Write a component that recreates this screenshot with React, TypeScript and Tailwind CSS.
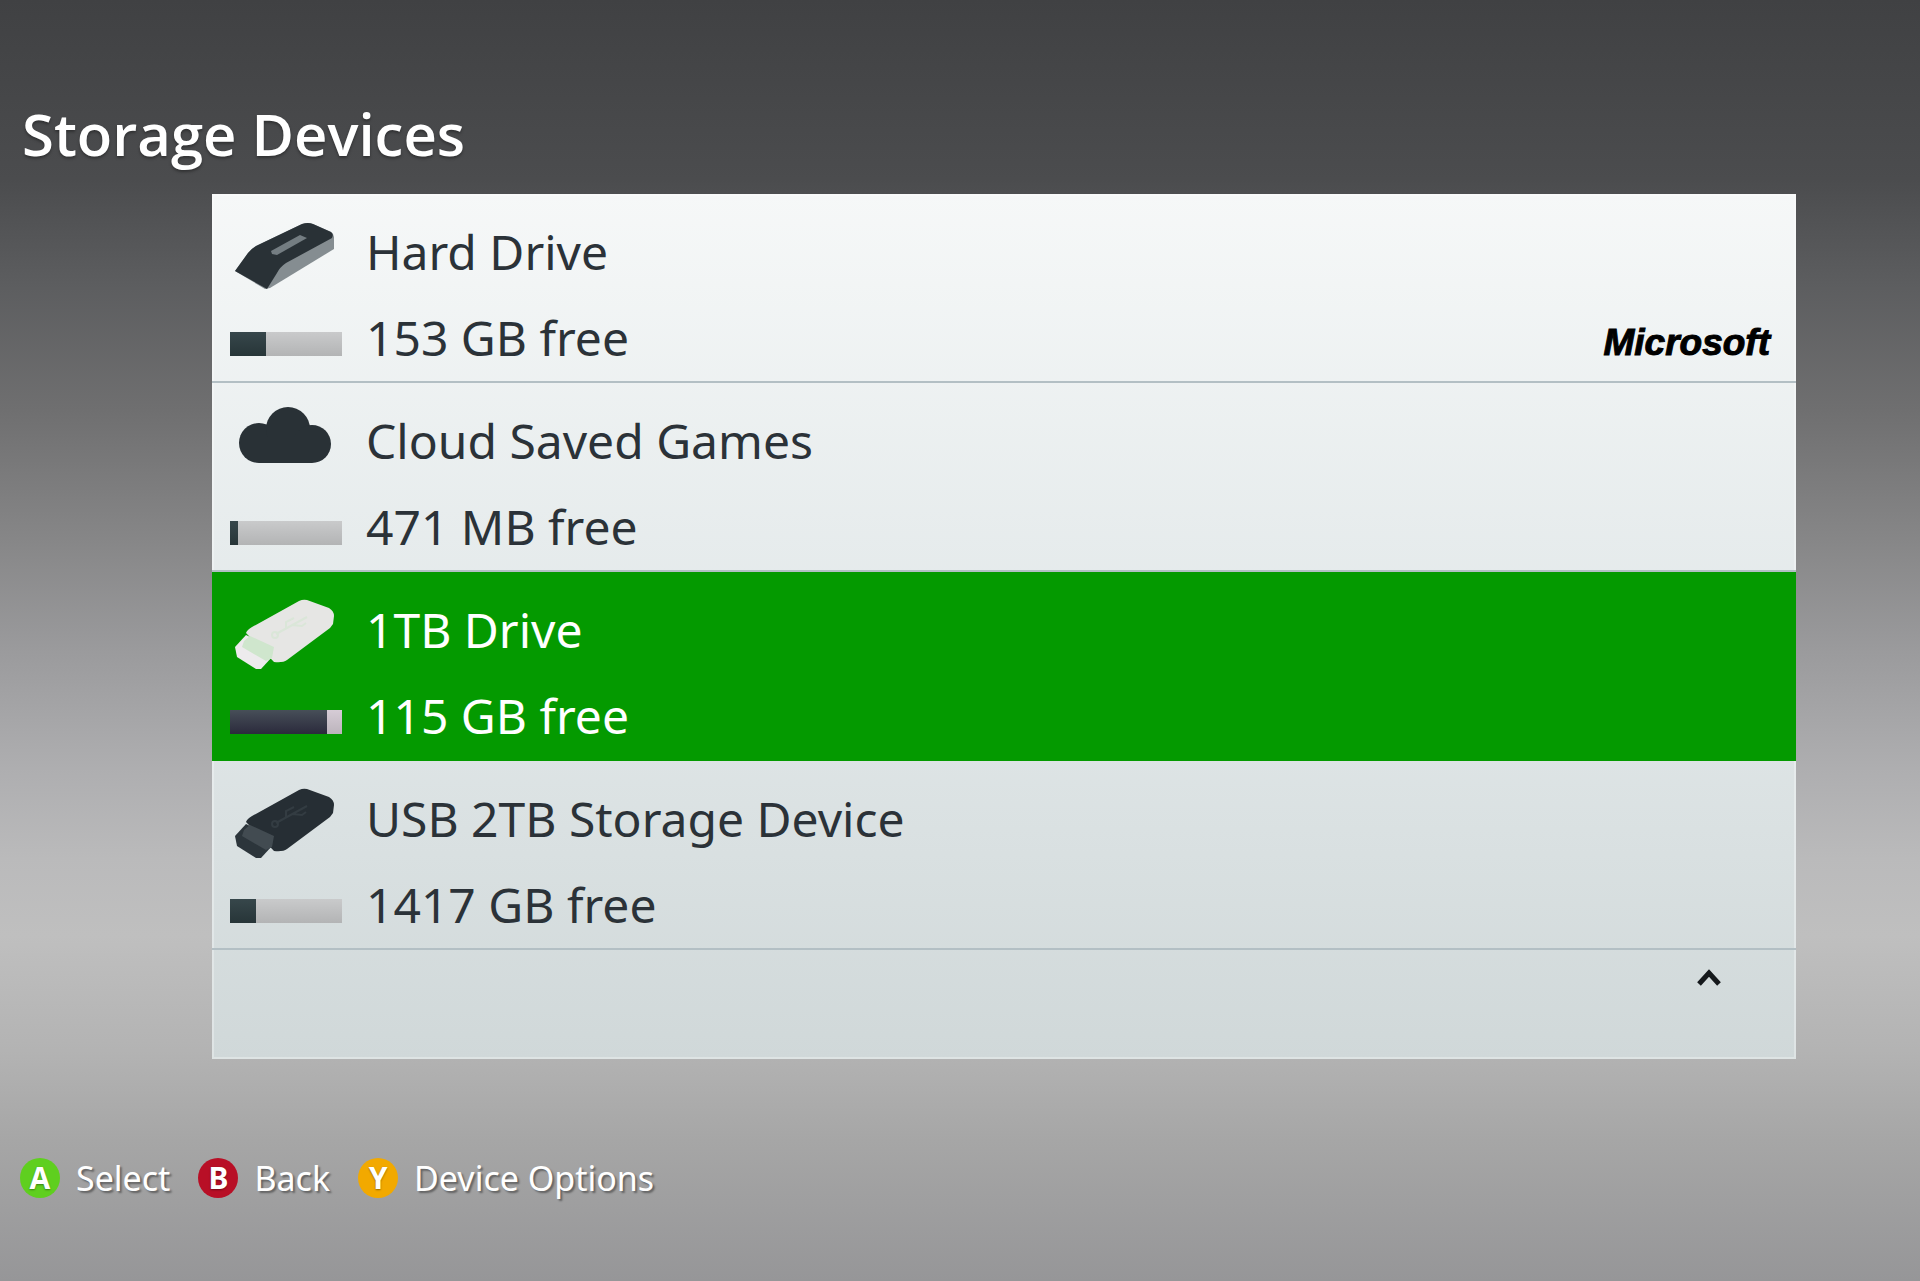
import type { ReactNode } from "react";

type Device = { name: string; free: string; used: number; icon: ReactNode; vendor?: string; selected?: boolean };

function HardDriveIcon() {
  return (
    <svg viewBox="0 0 100 68" className="h-[68px] w-[100px]" aria-hidden="true">
      <path d="M1 49 L14 31 Q17 27 22 24 L68 2 Q74 0 79 2 L97 10 Q100 12 100 15 L100 27 L36 66 L31 67 Z" fill="#858d91" />
      <path d="M1 49 L14 31 Q17 27 22 24 L68 2 Q74 0 79 2 L97 10 Q100 12 98 16 L52 41 Q46 45 43 51 L33 67 Z" fill="#293136" />
      <path d="M37 29 L66 13 L73 16 L43 33 L38 32 Z" fill="#747d82" />
    </svg>
  );
}

function CloudIcon() {
  return (
    <svg viewBox="0 0 100 84" className="h-[84px] w-[100px]" fill="#293136" aria-hidden="true">
      <circle cx="25" cy="40" r="20" />
      <circle cx="54" cy="26" r="22" />
      <circle cx="78" cy="41" r="19" />
      <rect x="25" y="34" width="53" height="26" />
    </svg>
  );
}

function UsbIcon({ light = false }: { light?: boolean }) {
  return (
    <svg viewBox="0 0 100 72" className="h-[72px] w-[100px]" aria-hidden="true">
      <path d="M12 35 Q13 32 18 29 L65 3 Q69 1 73 2 L95 10 Q100 13 100 18 L99 26 L96 30 L53 62 Q49 65 40 64 Z" fill={light ? "#e6e6e4" : "#262e34"} />
      <path d="M1 49 L12 37 L37 49 L38 59 L27 71 L22 71 L3 59 Z" fill={light ? "#edebed" : "#2c353b"} />
      <path d="M10 43 L16 38 L40 49 L38 60 L32 63 L8 49 Z" fill={light ? "#cfe6cd" : "#424b51"} />
      <g fill="none" stroke={light ? "#dae6d8" : "#333c42"} strokeWidth="2">
        <path d="M42 36 L73 19 M52 30 L52 24 L60 20 M58 27 L68 28 L72 25" />
        <circle cx="41" cy="37" r="3" />
      </g>
    </svg>
  );
}

const DEVICES: Device[] = [
  { name: "Hard Drive", free: "153 GB free", used: 32, icon: <HardDriveIcon />, vendor: "Microsoft" },
  { name: "Cloud Saved Games", free: "471 MB free", used: 7, icon: <CloudIcon /> },
  { name: "1TB Drive", free: "115 GB free", used: 87, icon: <UsbIcon light />, selected: true },
  { name: "USB 2TB Storage Device", free: "1417 GB free", used: 23, icon: <UsbIcon /> },
];

const ACTIONS = [
  { key: "A", label: "Select", color: "bg-[#5fcf1f]" },
  { key: "B", label: "Back", color: "bg-[#b80f26]" },
  { key: "Y", label: "Device Options", color: "bg-[#f2a900]" },
];

function UsageBar({ used, selected }: { used: number; selected?: boolean }) {
  return (
    <span className={`flex h-6 w-28 ${selected ? "bg-gradient-to-b from-[#d6ccd6] to-[#bcb4bc]" : "bg-gradient-to-b from-[#c9cacb] to-[#b3b4b5]"}`}>
      <span className={selected ? "bg-gradient-to-b from-[#474f58] to-[#2b2a3c]" : "bg-gradient-to-b from-[#37474b] to-[#273538]"} style={{ width: `${used}%` }} />
    </span>
  );
}

function DeviceRow({ device }: { device: Device }) {
  const { name, free, used, icon, vendor, selected } = device;
  return (
    <li>
      <button
        type="button"
        aria-current={selected}
        className={`grid w-full grid-cols-[112px_1fr_auto] gap-x-6 border-b-2 px-[18px] pt-[15px] text-left text-5xl ${selected ? "border-[#049a00] bg-[#049a00] text-white" : "border-[#b3bfc4] text-[#2b3238]"}`}
      >
        <span className="flex h-[86px] items-center pt-2 pl-1">{icon}</span>
        <span className="col-span-2 leading-[86px]">{name}</span>
        <span className="flex h-[86px] items-center pt-3"><UsageBar used={used} selected={selected} /></span>
        <span className="leading-[86px]">{free}</span>
        {vendor && (
          <span className="flex h-[86px] items-center pt-2 pr-2 font-['Liberation_Sans',Arial,sans-serif] text-[37px] leading-none font-bold text-black italic [-webkit-text-stroke:1px_black]">{vendor}</span>
        )}
      </button>
    </li>
  );
}

export default function App() {
  return (
    <main className="flex min-h-screen flex-col bg-[linear-gradient(180deg,#404143_0%,#4b4c4e_14%,#5c5d5f_22%,#6f6f70_32%,#868687_42%,#9b9b9d_51%,#aeaeb0_60%,#bababb_67%,#bfbfbf_73%,#b3b3b3_82%,#a6a6a6_89%,#969698_100%)] font-['Noto_Sans','Open_Sans',sans-serif]">
      <h1 className="px-[22px] pt-[90px] font-['Open_Sans','Noto_Sans',sans-serif] text-[58px] leading-[88px] font-semibold text-white [text-shadow:0_2px_3px_rgba(0,0,0,0.35)]">Storage Devices</h1>
      <section className="mt-4 mr-[124px] ml-[212px] bg-gradient-to-b from-[#f6f8f8] via-[#e3e9ea] to-[#d0d8d9] shadow-[inset_0_0_0_2px_rgba(255,255,255,0.3)]">
        <ul>
          {DEVICES.map((d) => <DeviceRow key={d.name} device={d} />)}
        </ul>
        <div className="flex h-[109px] justify-end pt-[10px] pr-[71px]">
          <button type="button" aria-label="Scroll up" className="h-8 w-8">
            <svg viewBox="0 0 32 32" className="h-8 w-8" fill="none" stroke="#15191c" strokeWidth="5" aria-hidden="true">
              <path d="M6 24 L16 13 L26 24" />
            </svg>
          </button>
        </div>
      </section>
      <footer className="mt-[94px] flex gap-7 px-5 text-[34px] leading-[50px] text-white">
        {ACTIONS.map((a) => (
          <button key={a.key} type="button" className="flex items-center gap-4">
            <span className={`flex h-10 w-10 items-center justify-center rounded-full text-3xl font-bold [text-shadow:0_1px_2px_rgba(0,0,0,0.4)] ${a.color}`}>{a.key}</span>
            <span className="[text-shadow:2px_2px_2px_rgba(0,0,0,0.4)]">{a.label}</span>
          </button>
        ))}
      </footer>
    </main>
  );
}
